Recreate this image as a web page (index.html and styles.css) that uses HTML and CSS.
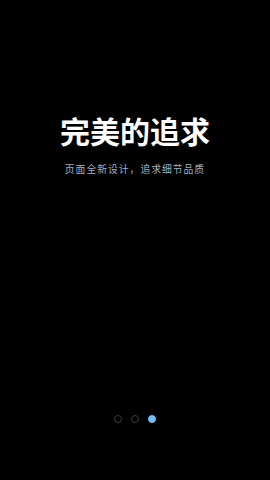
FILE: index.html
```html
<!DOCTYPE html>
<html lang="zh-CN">
<head>
  <meta charset="UTF-8">
  <meta name="viewport" content="width=device-width, initial-scale=1.0">
  <title>完美的追求</title>
  <link rel="stylesheet" href="styles.css">
</head>
<body>
  <div class="guide">
    <h1 class="title">完美的追求</h1>
    <p class="subtitle">页面全新设计，追求细节品质</p>

    <div class="dots">
      <span class="dot"></span>
      <span class="dot"></span>
      <span class="dot active"></span>
    </div>
  </div>
</body>
</html>
```

FILE: styles.css
```css
html, body {
  margin: 0;
  height: 100%;
  background: #000;
}
body {
  font-family: "Noto Sans CJK SC", "Noto Sans", sans-serif;
  color: #fff;
}
.guide {
  height: 100%;
  display: flex;
  flex-direction: column;
  align-items: center;
  box-sizing: border-box;
  padding-top: 113px;
  padding-bottom: 57px;
}
.title {
  margin: 0;
  font-size: 30px;
  line-height: 34px;
  font-weight: 700;
}
.subtitle {
  margin: 14px 0 0;
  font-size: 9.8px;
  line-height: 16px;
  color: #a3b0bf;
  letter-spacing: 1px;
  white-space: nowrap;
}
.dots {
  margin-top: auto;
  display: flex;
  gap: 9px;
}
.dot {
  width: 8px;
  height: 8px;
  border-radius: 50%;
  border: 1px solid #3a3a3a;
  box-sizing: border-box;
}
.dot.active {
  background: #72bdf2;
  border-color: #72bdf2;
}
```
